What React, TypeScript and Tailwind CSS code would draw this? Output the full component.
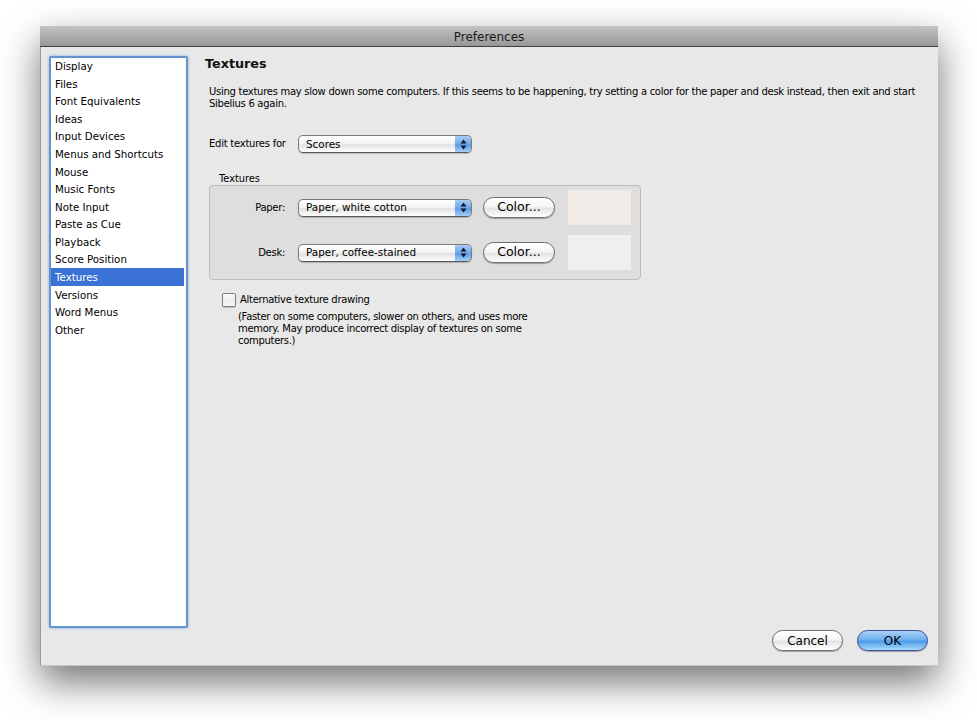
import type { ReactNode } from "react";

const items = [
  "Display",
  "Files",
  "Font Equivalents",
  "Ideas",
  "Input Devices",
  "Menus and Shortcuts",
  "Mouse",
  "Music Fonts",
  "Note Input",
  "Paste as Cue",
  "Playback",
  "Score Position",
  "Textures",
  "Versions",
  "Word Menus",
  "Other",
];

function Stepper() {
  return (
    <span className="flex h-full w-[16px] items-center justify-center rounded-r-[4px] bg-[linear-gradient(#a9cdf3,#6fa8e8_50%,#5d9ce6_55%,#a5cdf5)]">
      <svg width="7" height="11" viewBox="0 0 7 11">
        <path d="M3.5 0.5 L6.5 4.5 H0.5 Z M3.5 10.5 L0.5 6.5 H6.5 Z" fill="#10182a" />
      </svg>
    </span>
  );
}

function Select({ label }: { label: string }) {
  return (
    <div className="flex h-[18px] w-[174px] items-center justify-between rounded-[5px] border border-[#7b7b7b] border-b-[#555] bg-[linear-gradient(#ffffff,#f4f4f4_45%,#e2e2e2_55%,#ffffff)] pl-[7px] shadow-[0_1px_1px_rgba(0,0,0,0.2)]">
      <span className="text-[10.4px] leading-none text-black">{label}</span>
      <Stepper />
    </div>
  );
}

function PillButton({ children, className }: { children: ReactNode; className: string }) {
  return (
    <div
      className={`flex h-[21px] items-center justify-center rounded-full border leading-none text-black shadow-[0_1px_1px_rgba(0,0,0,0.3)] ${className}`}
    >
      {children}
    </div>
  );
}

function TextureRow({ label, select, swatch }: { label: string; select: string; swatch: string }) {
  return (
    <div className="flex h-[35px] items-center">
      <span className="w-[75px] text-right text-[10px] leading-none tracking-[-0.28px] text-black">{label}</span>
      <div className="ml-[13px]">
        <Select label={select} />
      </div>
      <PillButton className="ml-[11px] w-[72px] border-[#6d6d6d] bg-[linear-gradient(#ffffff,#f6f6f6_45%,#e4e4e4_55%,#ffffff)] text-[12.6px]">
        Color...
      </PillButton>
      <div className={`ml-[13px] h-[35px] w-[63px] ${swatch}`} />
    </div>
  );
}

export default function App() {
  return (
    <div className="h-[720px] w-[977px] overflow-hidden bg-white pl-[40px] pt-[26px] font-['DejaVu_Sans',sans-serif]">
      <div className="flex h-[640px] w-[898px] flex-col bg-[#e8e8e8] shadow-[0_16px_36px_rgba(0,0,0,0.55)]">
        <div className="flex h-[21px] shrink-0 items-center justify-center border-b border-[#404040] bg-[linear-gradient(#c4c4c4,#979797)] pt-[1px] text-[12px] leading-none text-[#1a1a1a]">
          Preferences
        </div>
        <div className="flex min-h-0 flex-1 border-b border-l border-[#c9c9c9] border-l-[#999] pl-[8px] pt-[9px]">
          <ul className="h-[572px] w-[139px] shrink-0 rounded-[2px] border-[2px] border-[#6493cd] bg-white shadow-[0_0_3px_#7fa9da] [&>li:first-child]:mt-[-0.6px]">
            {items.map((item) => (
              <li
                key={item}
                className={`mr-[2px] flex h-[17.58px] items-center pl-[4px] text-[10.25px] leading-none ${
                  item === "Textures" ? "bg-[#3a72d8] text-white" : "text-black"
                }`}
              >
                {item}
              </li>
            ))}
          </ul>
          <div className="flex min-w-0 flex-1 flex-col pl-[17px]">
            <h1 className="mt-[-1px] text-[12.75px] font-bold leading-[17px] text-[#111]">Textures</h1>
            <p className="ml-[4px] mt-[14px] w-[720px] text-[10px] leading-[12px] tracking-[-0.28px] text-black">
              Using textures may slow down some computers. If this seems to be happening, try setting a color for the paper and desk instead, then exit and start Sibelius 6 again.
            </p>
            <div className="ml-[4px] mt-[25px] flex items-center">
              <span className="w-[89px] text-[10px] leading-none tracking-[-0.24px] text-black">Edit textures for</span>
              <Select label="Scores" />
            </div>
            <div className="ml-[14px] mt-[19px] text-[9.8px] leading-[13px] text-black">Textures</div>
            <div className="ml-[4px] flex h-[95px] w-[432px] flex-col gap-[10px] rounded-[4px] border border-[#bcbcbc] bg-[#dedede] pt-[4px]">
              <TextureRow
                label="Paper:"
                select="Paper, white cotton"
                swatch="bg-[repeating-linear-gradient(#f1ece7_0px,#f1ece7_3px,#eee9e4_4px,#f3efeb_6px)]"
              />
              <TextureRow
                label="Desk:"
                select="Paper, coffee-stained"
                swatch="bg-[repeating-linear-gradient(#f0f0f0_0px,#f0f0f0_3px,#ededed_4px,#f2f2f2_6px)]"
              />
            </div>
            <div className="ml-[17px] mt-[13px] flex items-center">
              <span className="h-[14px] w-[14px] rounded-[2px] border border-[#7f7f7f] bg-[linear-gradient(#ffffff,#ececec_50%,#f8f8f8)] shadow-[0_1px_1px_rgba(0,0,0,0.2)]" />
              <span className="ml-[4px] text-[10px] leading-none tracking-[-0.3px] text-black">Alternative texture drawing</span>
            </div>
            <p className="ml-[33px] mt-[4px] w-[300px] text-[10px] leading-[12px] tracking-[-0.3px] text-black">
              (Faster on some computers, slower on others, and uses more memory. May produce incorrect display of textures on some computers.)
            </p>
            <div className="mb-[14px] mr-[10px] mt-auto flex justify-end gap-[14px]">
              <PillButton className="w-[71px] border-[#6d6d6d] bg-[linear-gradient(#ffffff,#f6f6f6_45%,#e4e4e4_55%,#ffffff)] text-[12px]">
                Cancel
              </PillButton>
              <PillButton className="w-[71px] border-[#3d4f9c] bg-[linear-gradient(#a9d0f5,#6fb0ee_45%,#4f9bea_55%,#a8dcfb)] text-[12px]">
                OK
              </PillButton>
            </div>
          </div>
        </div>
      </div>
    </div>
  );
}
